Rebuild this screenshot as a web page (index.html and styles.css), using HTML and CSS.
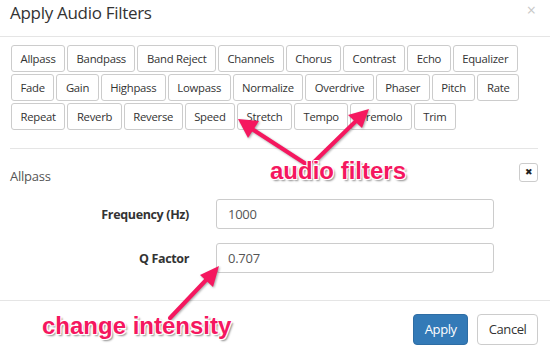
FILE: index.html
```html
<!DOCTYPE html>
<html lang="en">
<head>
  <meta charset="UTF-8" />
  <title>Apply Audio Filters</title>
  <link rel="stylesheet" href="styles.css">
</head>
<body>

  <div class="modal">
    <!-- Header -->
    <div class="modal-header">
      <h4 class="modal-title">Apply Audio Filters</h4>
      <span class="close">&times;</span>
    </div>

    <!-- Body -->
    <div class="modal-body">
      <div class="filters">
        <button class="btn">Allpass</button>
        <button class="btn">Bandpass</button>
        <button class="btn">Band Reject</button>
        <button class="btn">Channels</button>
        <button class="btn">Chorus</button>
        <button class="btn">Contrast</button>
        <button class="btn">Echo</button>
        <button class="btn">Equalizer</button>
        <button class="btn">Fade</button>
        <button class="btn">Gain</button>
        <button class="btn">Highpass</button>
        <button class="btn">Lowpass</button>
        <button class="btn">Normalize</button>
        <button class="btn">Overdrive</button>
        <button class="btn">Phaser</button>
        <button class="btn">Pitch</button>
        <button class="btn">Rate</button>
        <button class="btn">Repeat</button>
        <button class="btn">Reverb</button>
        <button class="btn">Reverse</button>
        <button class="btn">Speed</button>
        <button class="btn">Stretch</button>
        <button class="btn">Tempo</button>
        <button class="btn">Tremolo</button>
        <button class="btn">Trim</button>
      </div>

      <hr class="divider">

      <div class="filter-panel">
        <div class="panel-head">
          <span class="panel-title">Allpass</span>
          <button class="remove">&#10006;</button>
        </div>
        <div class="form-row">
          <label class="form-label">Frequency (Hz)</label>
          <input class="form-input" type="text" value="1000">
        </div>
        <div class="form-row">
          <label class="form-label">Q Factor</label>
          <input class="form-input" type="text" value="0.707">
        </div>
      </div>
    </div>

    <!-- Footer -->
    <div class="modal-footer">
      <button class="btn-lg primary">Apply</button>
      <button class="btn-lg">Cancel</button>
    </div>
  </div>

  <!-- annotations drawn over the screenshot -->
  <svg class="arrows" width="550" height="346" viewBox="0 0 550 346">
    <g fill="#f5175f" stroke="#f5175f" stroke-width="4" stroke-linecap="round">
      <line x1="306" y1="164" x2="252" y2="129" />
      <polygon stroke="none" points="238,119 259,121 248,138" />
      <line x1="314" y1="162" x2="356" y2="121" />
      <polygon stroke="none" points="369,109 348,115 362,128" />
      <line x1="170" y1="318" x2="208" y2="278" />
      <polygon stroke="none" points="219,266 200,275 213,287" />
    </g>
  </svg>
  <span class="note note-filters">audio filters</span>
  <span class="note note-intensity">change intensity</span>

</body>
</html>
```

FILE: styles.css
```css
body {
  margin: 0;
  font-family: "Open Sans", Arial, sans-serif;
  background: #fff;
  color: #333;
  width: 550px;
  height: 346px;
  overflow: hidden;
  position: relative;
}

.modal {
  width: 550px;
}

.modal-header {
  display: flex;
  justify-content: space-between;
  align-items: flex-start;
  height: 36px;
  padding: 0 10px;
  border-bottom: 1px solid #e5e5e5;
}

.modal-title {
  margin: 1px 0 0;
  font-size: 17px;
  font-weight: normal;
  letter-spacing: -0.3px;
  line-height: 24px;
  color: #333;
}

.close {
  font-size: 16px;
  line-height: 20px;
  color: #c8c8c8;
  margin-right: 4px;
}

.modal-body {
  padding: 8px 10px 0 10px;
}

.filters {
  display: flex;
  flex-wrap: wrap;
  gap: 2px;
  padding-left: 1px;
}

.btn {
  font-family: inherit;
  font-size: 11.3px;
  letter-spacing: -0.25px;
  line-height: 17px;
  color: #333;
  background: #fff;
  border: 1px solid #ccc;
  border-radius: 3px;
  padding: 4px 8.5px;
}

.divider {
  border: 0;
  border-top: 1px solid #e5e5e5;
  margin: 18px 2px 0 0;
}

.panel-head {
  display: flex;
  justify-content: space-between;
  align-items: flex-start;
  margin-top: 14px;
  height: 20px;
}

.panel-title {
  padding-top: 4px;
  font-size: 13px;
  letter-spacing: -0.25px;
  line-height: 18px;
  color: #555;
}

.remove {
  width: 19px;
  height: 19px;
  padding: 0;
  font-size: 9px;
  line-height: 17px;
  color: #222;
  background: #fff;
  border: 1px solid #ccc;
  border-radius: 3px;
  margin-right: 2px;
}

.form-row {
  display: flex;
  align-items: center;
  gap: 27px;
  margin-top: 16px;
}

.form-row + .form-row {
  margin-top: 14px;
}

.form-label {
  width: 179px;
  text-align: right;
  font-size: 12.5px;
  letter-spacing: -0.35px;
  font-weight: bold;
  color: #333;
}

.form-input {
  width: 278px;
  height: 30px;
  box-sizing: border-box;
  padding: 4px 11px;
  font-family: inherit;
  font-size: 13px;
  letter-spacing: -0.25px;
  color: #555;
  border: 1px solid #ccc;
  border-radius: 3px;
}

.modal-footer {
  display: flex;
  justify-content: flex-end;
  gap: 9px;
  margin-top: 27px;
  padding: 13px 12px 0;
  border-top: 1px solid #e5e5e5;
}

.btn-lg {
  font-family: inherit;
  font-size: 13px;
  letter-spacing: -0.4px;
  line-height: 19px;
  padding: 5px 10.5px;
  color: #333;
  background: #fff;
  border: 1px solid #ccc;
  border-radius: 4px;
}

.primary {
  color: #fff;
  background: #337ab7;
  border-color: #2e6da4;
}

.arrows {
  position: absolute;
  left: 0;
  top: 0;
  filter: drop-shadow(1px 1px 1px rgba(0,0,0,0.35));
}

.note {
  position: absolute;
  font-family: "Liberation Sans", Arial, sans-serif;
  font-weight: bold;
  font-size: 24px;
  line-height: 26px;
  color: #f5175f;
  text-shadow:
    -1px -1px 0 #fff, 1px -1px 0 #fff, -1px 1px 0 #fff, 1px 1px 0 #fff,
    2px 2px 2px rgba(0,0,0,0.45);
}

.note-filters {
  left: 270px;
  top: 158px;
}

.note-intensity {
  left: 42px;
  top: 313px;
}
```
